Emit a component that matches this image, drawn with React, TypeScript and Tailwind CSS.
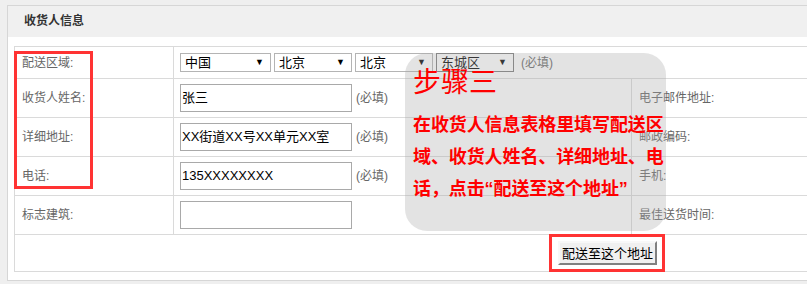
import React from 'react'

const label = 'text-xs text-[#666] pl-[7px] border border-[#dadada]'
const cell = 'border border-[#dadada] pl-[6px]'

function FakeSelect({ text, width, dark }: { text: string; width: string; dark?: boolean }) {
  return (
    <div
      className={`${width} h-[19px] flex items-center justify-between bg-white pl-[4px] pr-[6px] text-[13px] text-black border ${
        dark ? 'border-[#7a7a7a]' : 'border-[#b4b4b4]'
      }`}
    >
      <span className="leading-none">{text}</span>
      <span className="text-[9px] leading-none">▼</span>
    </div>
  )
}

function TextBox({ value }: { value?: string }) {
  return (
    <div className="w-[172px] h-[28px] border border-[#a9a9a9] bg-white pl-[1px] flex items-center text-[13px] text-black whitespace-nowrap overflow-hidden">
      {value}
    </div>
  )
}

const Required = () => <span className="text-xs text-[#666] ml-[4px]">(必填)</span>

export default function App() {
  return (
    <div className="relative w-[807px] h-[284px] overflow-hidden bg-[#efefef] pt-[5px] pl-[7px] font-['Liberation_Sans','Noto_Sans_CJK_SC',sans-serif]">
      <div className="w-[900px] border border-[#d6d6d6] bg-white">
        {/* Header */}
        <div className="h-[31px] bg-[#f0f0f0] pl-[16px] text-xs font-bold leading-[31px] text-[#333]">收货人信息</div>

        {/* Form */}
        <div className="pl-[6px] pt-[9px] pb-[8px]">
          <table className="w-[1000px] border-collapse table-fixed">
            <colgroup>
              <col className="w-[159px]" />
              <col className="w-[458px]" />
              <col />
            </colgroup>
            <tbody>
              <tr className="h-[32px]">
                <td className={label}>配送区域:</td>
                <td className={cell} colSpan={2}>
                  <div className="flex items-center gap-[3px]">
                    <FakeSelect text="中国" width="w-[91px]" />
                    <FakeSelect text="北京" width="w-[78px]" />
                    <FakeSelect text="北京" width="w-[78px]" />
                    <FakeSelect text="东城区" width="w-[78px]" dark />
                    <Required />
                  </div>
                </td>
              </tr>
              <tr className="h-[39px]">
                <td className={label}>收货人姓名:</td>
                <td className={cell}>
                  <div className="flex items-center">
                    <TextBox value="张三" />
                    <Required />
                  </div>
                </td>
                <td className={label}>电子邮件地址:</td>
              </tr>
              <tr className="h-[39px]">
                <td className={label}>详细地址:</td>
                <td className={cell}>
                  <div className="flex items-center">
                    <TextBox value="XX街道XX号XX单元XX室" />
                    <Required />
                  </div>
                </td>
                <td className={label}>邮政编码:</td>
              </tr>
              <tr className="h-[39px]">
                <td className={label}>电话:</td>
                <td className={cell}>
                  <div className="flex items-center">
                    <TextBox value="135XXXXXXXX" />
                    <Required />
                  </div>
                </td>
                <td className={label}>手机:</td>
              </tr>
              <tr className="h-[39px]">
                <td className={label}>标志建筑:</td>
                <td className={cell}>
                  <TextBox />
                </td>
                <td className={label}>最佳送货时间:</td>
              </tr>
              <tr className="h-[37px]">
                <td className="border border-[#dadada] pl-[543px]" colSpan={3}>
                  <button className="w-[99px] h-[24px] px-0 bg-[#f0f0f0] text-[13px] leading-none text-black border-2 border-t-[#f8f8f8] border-l-[#f8f8f8] border-r-[#808080] border-b-[#808080]">
                    配送至这个地址
                  </button>
                </td>
              </tr>
            </tbody>
          </table>
        </div>
      </div>

      {/* Step annotation bubble */}
      <div className="absolute left-[405px] top-[53px] w-[261px] h-[178px] rounded-[22px] bg-[rgba(170,170,170,0.33)] pl-[8px] pt-[14px] text-[#ff0000]">
        <div className="text-[28px] leading-[32px]">步骤三</div>
        <div className="mt-[10px] text-[18px] font-bold leading-[32px] tracking-[-0.1px]">
          在收货人信息表格里填写配送区域、收货人姓名、详细地址、电话，点击“配送至这个地址”
        </div>
      </div>

      {/* Red highlight boxes */}
      <div className="absolute left-[14px] top-[51px] w-[79px] h-[138px] border-[3px] border-[#f33]" />
      <div className="absolute left-[549px] top-[234px] w-[116px] h-[38px] border-[3px] border-[#f33]" />
    </div>
  )
}
